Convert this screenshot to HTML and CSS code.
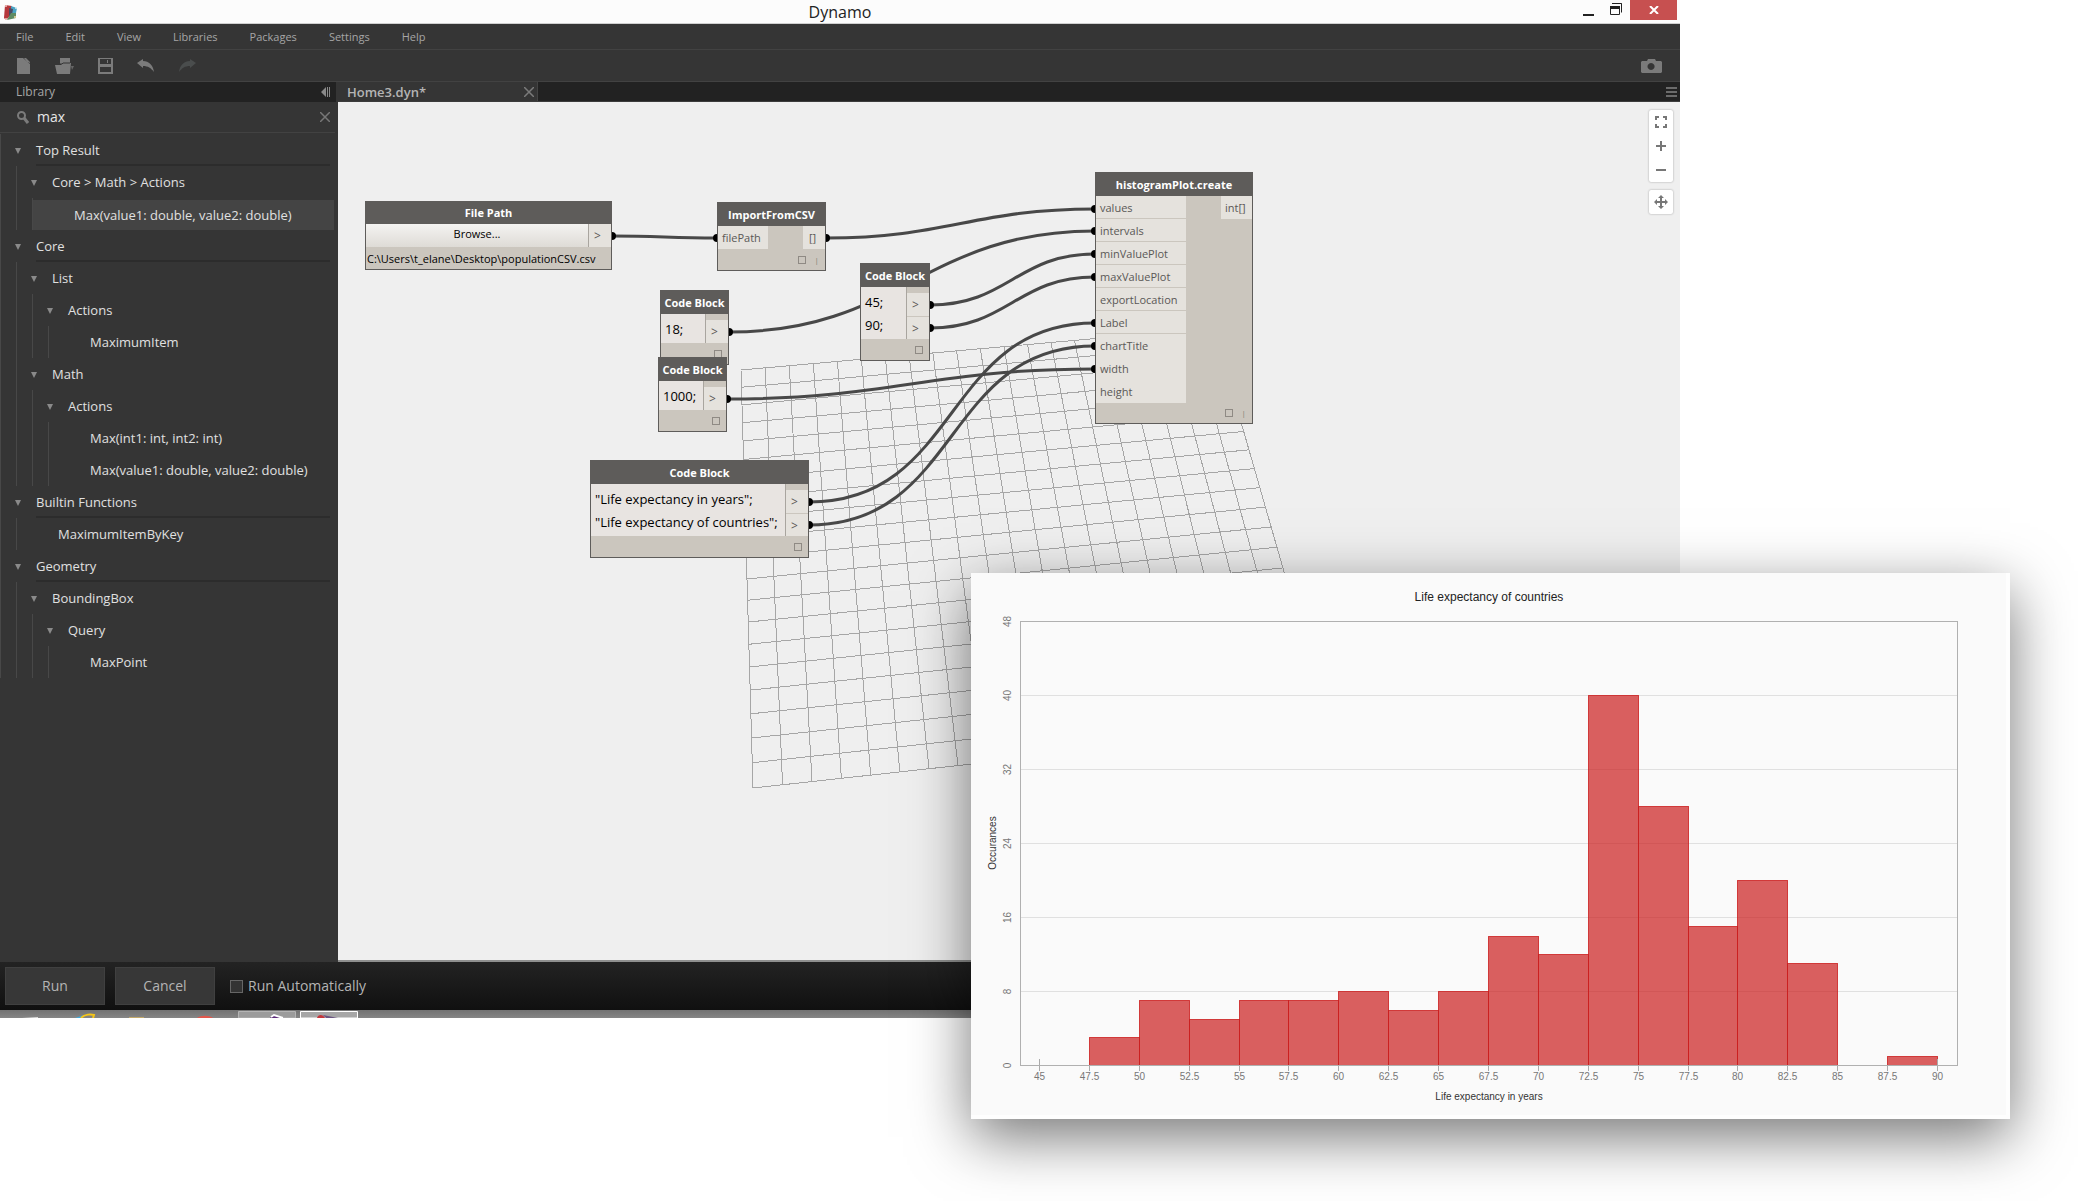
FILE: index.html
```html
<!DOCTYPE html>
<html lang="en">
<head>
<meta charset="utf-8">
<title>Dynamo</title>
<link rel="stylesheet" href="styles.css">
</head>
<body>
<div class="window">
  <header class="titlebar">
    <svg class="app-icon" width="14" height="17" viewBox="0 0 14 17" aria-hidden="true">
      <path d="M1 1 8 2 7 11 2 16 0 14z" fill="#b5373c"/>
      <path d="M7 2 13 4 12 9 7 9z" fill="#4aa3c4"/>
      <path d="M5 4 9 5 8 11 5 12z" fill="#4b4a63"/>
      <path d="M7 9 12 9 12 14 3 16z" fill="#5e8a62"/>
      <circle cx="2" cy="2" r="1" fill="#f3c6c0"/><circle cx="12" cy="4" r="1" fill="#d9eef5"/><circle cx="11" cy="13" r="1" fill="#f0d9a0"/><circle cx="2" cy="15" r="1" fill="#f3c6c0"/>
    </svg>
    <h1 class="title">Dynamo</h1>
    <div class="window-controls">
      <button class="wc" aria-label="Minimize"><svg width="12" height="14" viewBox="0 0 12 14"><path d="M0 11h11v2H0z" fill="#222"/></svg></button>
      <button class="wc" aria-label="Restore"><svg width="12" height="14" viewBox="0 0 12 14"><path d="M2.500 .5h9V9.500M2 .5h9.500" fill="none" stroke="#222"/><path d="M.5 3.500h9v8h-9z" fill="none" stroke="#222"/><path d="M0 3h10v3H0z" fill="#222"/></svg></button>
      <button class="wc close" aria-label="Close"><svg width="10" height="8" viewBox="0 0 10 8"><path d="M1 0 9 8M9 0 1 8" stroke="#fff" stroke-width="2"/></svg></button>
    </div>
  </header>

  <nav class="menubar">
    <a href="#">File</a><a href="#">Edit</a><a href="#">View</a><a href="#">Libraries</a><a href="#">Packages</a><a href="#">Settings</a><a href="#">Help</a>
  </nav>

  <div class="toolbar">
    <button class="tool" aria-label="New"><svg width="14" height="16" viewBox="0 0 14 16"><path d="M0 0h6l7 6v10H0z" fill="#7b7b7b"/><path d="M7 0h2l4 4v1l-3-1z" fill="#7b7b7b"/></svg></button>
    <button class="tool" aria-label="Open"><svg width="19" height="16" viewBox="0 0 19 16"><path d="M5 0h10v6H5zM0 7h6l1-2h9l-1 11H2z" fill="#7b7b7b"/><path d="M5 6h2l1-1h7" fill="none" stroke="#353535"/><path d="M16 8h3l-2 4z" fill="#666"/></svg></button>
    <button class="tool" aria-label="Save"><svg width="15" height="16" viewBox="0 0 15 16"><path fill-rule="evenodd" d="M0 0h15v16H0zM2 1v5h11V1zM2 9v5h11V9z" fill="#7b7b7b"/><path d="M9 2h1v3H9z" fill="#7b7b7b"/></svg></button>
    <button class="tool" aria-label="Undo"><svg width="18" height="14" viewBox="0 0 18 14"><path d="M0 4 6 0v2c6 0 10 4 11 11C14 9 11 7 6 7v2z" fill="#7b7b7b"/></svg></button>
    <button class="tool" aria-label="Redo" disabled><svg width="18" height="14" viewBox="0 0 18 14"><path d="M17 4 11 0v2C5 2 1 6 0 13 3 9 6 7 11 7v2z" fill="#4a4d4d"/></svg></button>
    <button class="tool camera" aria-label="Export image"><svg width="21" height="14" viewBox="0 0 21 14"><path fill-rule="evenodd" d="M1 2h5l1-2h7l1 2h5l1 1v10l-1 1H1l-1-1V3zM10 4a3.500 3.500 0 1 0 .1 0z" fill="#7b7b7b"/></svg></button>
  </div>

  <div class="workarea">
    <aside class="sidebar">
      <div class="library-head"><h2>Library</h2>
        <button class="plain" aria-label="Collapse library"><svg width="9" height="10" viewBox="0 0 9 10"><path d="M0 5 5 0v10zM6 0h1v10H6zM8 0h1v10H8z" fill="#8a8a8a"/></svg></button></div>
      <div class="search">
        <svg width="12" height="13" viewBox="0 0 12 13" aria-hidden="true"><circle cx="4.500" cy="4.500" r="3.500" fill="none" stroke="#7b7b7b" stroke-width="2"/><path d="M7 7l4 5" stroke="#7b7b7b" stroke-width="3"/></svg>
        <input type="text" value="max" aria-label="Search library">
        <button class="plain" aria-label="Clear search"><svg width="10" height="10" viewBox="0 0 10 10"><path d="M0 0 10 10M10 0 0 10" stroke="#777" stroke-width="1.500"/></svg></button>
      </div>
      <ul class="tree">
        <li><div class="row cat">Top Result</div>
          <ul><li><div class="row grp">Core &gt; Math &gt; Actions</div>
            <ul><li><div class="row leaf selected">Max(value1: double, value2: double)</div></li></ul></li></ul></li>
        <li><div class="row cat">Core</div>
          <ul>
            <li><div class="row grp">List</div>
              <ul><li><div class="row grp">Actions</div>
                <ul><li><div class="row leaf">MaximumItem</div></li></ul></li></ul></li>
            <li><div class="row grp">Math</div>
              <ul><li><div class="row grp">Actions</div>
                <ul><li><div class="row leaf">Max(int1: int, int2: int)</div></li>
                <li><div class="row leaf">Max(value1: double, value2: double)</div></li></ul></li></ul></li>
          </ul></li>
        <li><div class="row cat">Builtin Functions</div>
          <ul><li><div class="row leaf">MaximumItemByKey</div></li></ul></li>
        <li><div class="row cat">Geometry</div>
          <ul><li><div class="row grp">BoundingBox</div>
            <ul><li><div class="row grp">Query</div>
              <ul><li><div class="row leaf">MaxPoint</div></li></ul></li></ul></li></ul></li>
      </ul>
    </aside>

    <main class="workspace">
      <div class="tabs">
        <div class="tab"><span>Home3.dyn*</span>
          <button class="plain" aria-label="Close tab"><svg width="10" height="10" viewBox="0 0 10 10"><path d="M0 0 10 10M10 0 0 10" stroke="#7b7b7b" stroke-width="1.500"/></svg></button></div>
        <button class="plain tab-list" aria-label="Tab list"><svg width="11" height="10" viewBox="0 0 11 10"><path d="M0 0h11v2H0zM0 4h11v2H0zM0 8h11v2H0z" fill="#6b6b6b"/></svg></button>
      </div>

      <div class="canvas">
        <svg class="scene" aria-hidden="true">
          <g id="grid"></g>
          <g class="wires">
            <path d="M274 134C321 134 332 136 379 136"/>
            <path d="M488 136C610 136 635 107 757 107"/>
            <path d="M391 230C561 230 587 129 757 129"/>
            <path d="M592 203C670 203 679 152 757 152"/>
            <path d="M592 226C670 226 679 175 757 175"/>
            <path d="M389 297C555 297 591 267 757 267"/>
            <path d="M471 400C623 400 605 221 757 221"/>
            <path d="M471 423C623 423 605 244 757 244"/>
          </g>
          <g class="dots">
            <circle cx="274" cy="134" r="4"/><circle cx="379" cy="136" r="4"/>
            <circle cx="488" cy="136" r="4"/><circle cx="757" cy="107" r="4"/>
            <circle cx="391" cy="230" r="4"/><circle cx="757" cy="129" r="4"/>
            <circle cx="592" cy="203" r="4"/><circle cx="757" cy="152" r="4"/>
            <circle cx="592" cy="226" r="4"/><circle cx="757" cy="175" r="4"/>
            <circle cx="389" cy="297" r="4"/><circle cx="757" cy="267" r="4"/>
            <circle cx="471" cy="400" r="4"/><circle cx="757" cy="221" r="4"/>
            <circle cx="471" cy="423" r="4"/><circle cx="757" cy="244" r="4"/>
          </g>
        </svg>

        <section class="node n-file"><h3>File Path</h3>
          <div class="node-body"><button class="browse">Browse...</button><div class="outs flush"><span class="port out">&gt;</span></div></div>
          <p class="path">C:\Users\t_elane\Desktop\populationCSV.csv</p></section>

        <section class="node n-import"><h3>ImportFromCSV</h3>
          <div class="node-body"><div class="ins"><span class="port">filePath</span></div><div class="outs flush type"><span class="port">[]</span></div></div>
          <footer><i class="box"></i><span>|</span></footer></section>

        <section class="node n-18"><h3>Code Block</h3>
          <div class="node-body"><pre class="code">18;</pre><div class="outs"><span class="port out">&gt;</span></div></div>
          <footer><i class="box"></i></footer></section>

        <section class="node n-1000"><h3>Code Block</h3>
          <div class="node-body"><pre class="code">1000;</pre><div class="outs"><span class="port out">&gt;</span></div></div>
          <footer><i class="box"></i></footer></section>

        <section class="node n-range"><h3>Code Block</h3>
          <div class="node-body"><pre class="code">45;
90;</pre><div class="outs"><span class="port out">&gt;</span><span class="port out">&gt;</span></div></div>
          <footer><i class="box"></i></footer></section>

        <section class="node n-text"><h3>Code Block</h3>
          <div class="node-body"><pre class="code">"Life expectancy in years";
"Life expectancy of countries";</pre><div class="outs"><span class="port out">&gt;</span><span class="port out">&gt;</span></div></div>
          <footer><i class="box"></i></footer></section>

        <section class="node n-plot"><h3>histogramPlot.create</h3>
          <div class="node-body"><div class="ins">
            <span class="port ruled">values</span><span class="port ruled">intervals</span><span class="port ruled">minValuePlot</span><span class="port ruled">maxValuePlot</span><span class="port ruled">exportLocation</span><span class="port ruled">Label</span><span class="port">chartTitle</span><span class="port">width</span><span class="port">height</span></div>
            <div class="outs flush type"><span class="port">int[]</span></div></div>
          <footer><i class="box"></i><span>|</span></footer></section>

        <div class="view-controls">
          <div class="pad">
            <button aria-label="Zoom to fit"><svg width="12" height="12" viewBox="0 0 12 12"><path d="M1 4V1h3M8 1h3v3M11 8v3H8M4 11H1V8" fill="none" stroke="#777" stroke-width="2"/></svg></button>
            <button aria-label="Zoom in"><svg width="10" height="10" viewBox="0 0 10 10"><path d="M5 0v10M0 5h10" stroke="#777" stroke-width="2"/></svg></button>
            <button aria-label="Zoom out"><svg width="10" height="10" viewBox="0 0 10 10"><path d="M0 5h10" stroke="#777" stroke-width="2"/></svg></button>
          </div>
          <div class="pad">
            <button aria-label="Pan"><svg width="14" height="14" viewBox="0 0 14 14"><path d="M7 1v12M1 7h12" stroke="#777" stroke-width="2"/><path d="M7 0l3 3H4zM7 14l3-3H4zM0 7l3-3v6zM14 7l-3-3v6z" fill="#777"/></svg></button>
          </div>
        </div>
      </div>
    </main>
  </div>

  <div class="runbar">
    <button class="run">Run</button>
    <button class="run">Cancel</button>
    <label><input type="checkbox">Run Automatically</label>
  </div>

  <div class="taskbar">
    <svg width="380" height="8" viewBox="0 0 380 8" aria-hidden="true">
      <path d="M22 8 38 7v1z" fill="#ddd"/>
      <path d="M75 8 84 5 80 8z" fill="#3fa9dc"/><path d="M81 8C85 4 91 4 94 5l-1 3" fill="none" stroke="#f5c518" stroke-width="2"/>
      <path d="M129 7h15v1h-15z" fill="#c2a869"/>
      <path d="M197 8c4-3 12-3 16 0z" fill="#e2574c"/>
      <path d="M238.500 1.500h57V8h-57z" fill="#9b9b9b" stroke="#b4b4b4"/>
      <path d="M300.500 1.500h57V8h-57z" fill="#a6a6a6" stroke="#fff"/>
      <path d="M270 8 273 5 284 8z" fill="#5a2a78"/><path d="M271 7 274 5 283 8" fill="none" stroke="#fff" stroke-width="2"/>
      <path d="M317 8c1-4 6-4 8 0z" fill="#c4373c"/><path d="M323 5 338 8h-12z" fill="#6b5580"/>
    </svg>
  </div>
</div>

<figure class="chart-card">
  <div class="chart-inner">
    <svg id="chart" viewBox="0 0 1039 546" role="img" aria-label="Life expectancy of countries">
      <text class="c-title" x="518" y="28">Life expectancy of countries</text>
      <g id="plot"></g>
      <text class="c-axis" x="518" y="527">Life expectancy in years</text>
      <text class="c-axis" transform="translate(25 270) rotate(-90)">Occurances</text>
    </svg>
  </div>
</figure>
<script src="app.js"></script>
</body>
</html>
```
FILE: styles.css
```css
* { box-sizing: border-box; }
body {
  margin: 0;
  min-height: 100vh;
  position: relative;
  overflow: hidden;
  background: #fff;
  font: 13px/16px "Open Sans", sans-serif;
}
h1, h2, h3, p, ul, pre, figure { margin: 0; padding: 0; }
button { font: inherit; border: 0; padding: 0; background: none; color: inherit; display: flex; align-items: center; justify-content: center; }
svg { display: block; }

.window {
  width: calc(100% - 398px);
  height: calc(100vh - 183px);
  display: flex;
  flex-direction: column;
  background: #353535;
  color: #e0e0e0;
}

.titlebar {
  display: grid;
  grid-template-columns: 1fr auto 1fr;
  height: 24px;
  background: #fcfcfc;
  border-bottom: 1px solid #d0d0d0;
  color: #222;
}
.app-icon { margin: 4px 0 0 4px; }
.title { font-size: 16px; font-weight: 400; line-height: 24px; }
.window-controls { display: flex; justify-content: flex-end; align-items: flex-start; padding-right: 3px; }
.wc { width: 27px; height: 20px; padding-bottom: 1px; }
.wc.close { width: 47px; padding: 0; margin-left: 1px; background: #c75050; }

.menubar { display: flex; gap: 32px; height: 26px; padding: 0 16px; border-bottom: 1px solid #424242; }
.menubar a { color: #a6a6a6; text-decoration: none; font-size: 11px; line-height: 26px; }

.toolbar { display: flex; align-items: center; gap: 24px; height: 32px; padding: 0 18px 0 17px; border-bottom: 1px solid #424242; }
.camera { margin-left: auto; }

.workarea { flex: 1; display: flex; min-height: 0; }
.sidebar { width: 338px; flex: none; }
.library-head {
  display: flex; justify-content: space-between; align-items: center;
  height: 20px; margin-right: 2px; padding: 0 6px 0 16px; background: #222;
}
.library-head h2 { font-size: 12px; font-weight: 400; color: #a6a6a6; line-height: 20px; }
.search { display: flex; align-items: center; gap: 8px; height: 31px; margin-right: 3px; padding: 0 5px 0 17px; border-bottom: 1px solid #424242; }
.search input { flex: 1; min-width: 0; border: 0; padding: 0; background: none; color: #e6e6e6; font: 14px/20px "Open Sans", sans-serif; outline: 0; }

.tree, .tree ul { list-style: none; border-left: 1px solid #484848; }
.tree { margin: 1px 4px 0 0; }
.tree ul { margin-left: 15px; }
.row { position: relative; height: 32px; line-height: 33px; padding-left: 35px; white-space: nowrap; }
.row::before {
  content: ""; position: absolute; left: 14px; top: 14px;
  border: 3px solid transparent; border-top: 6px solid #8a8a8a; border-bottom: 0;
}
.cat { line-height: 32px; }
.cat::after { content: ""; position: absolute; left: 35px; right: 4px; bottom: 0; height: 2px; background: #2c2c2c; }
.leaf { padding-left: 41px; }
.leaf::before { display: none; }
.selected { line-height: 34px; background: linear-gradient(#353535 2px, #444 2px); }

.workspace { flex: 1; display: flex; flex-direction: column; min-width: 0; }
.tabs { display: flex; justify-content: space-between; height: 20px; padding-right: 3px; background: #222; border-bottom: 1px solid #3c3c3c; }
.tab { display: flex; justify-content: space-between; align-items: center; width: 200px; padding: 0 3px 0 9px; background: #353535; border-right: 1px solid #444; color: #b4b4b4; font-weight: 600; }

.canvas { position: relative; flex: 1; overflow: hidden; background: #efefef; border-bottom: 2px solid #8f908f; color: #000; }
.scene { position: absolute; inset: 0; width: 100%; height: 100%; }
#grid { stroke: #a6a6a6; stroke-width: 1px; shape-rendering: crispEdges; }
.wires { fill: none; stroke: #484848; stroke-width: 3px; }
.dots { fill: #000; }

.node { position: absolute; display: flex; flex-direction: column; background: #cbc6be; border: 1px solid #5e5c5a; }
.node h3 { background: #5e5c5a; color: #fff; font-size: 11px; line-height: 23px; text-align: center; white-space: nowrap; }
.node-body { display: flex; justify-content: space-between; }
.node footer { display: flex; flex: 1; align-items: center; justify-content: flex-end; gap: 9px; padding-right: 6px; font-size: 8px; color: #857f78; }
.box { width: 8px; height: 8px; border: 1px solid #8f8a84; }
.ins, .outs { display: flex; flex-direction: column; }
.port { height: 23px; padding: 0 5px 0 4px; background: #e5e2dd; color: #5a5856; font-size: 11px; line-height: 24px; }
.ruled { border-bottom: 1px solid #cbc6be; }
.outs { padding-top: 6px; border-left: 1px solid #a9a59f; }
.outs.flush { padding-top: 0; }
.outs.type { border: 0; }
.out { width: 22px; padding-left: 5px; font-size: 12px; }
.out + .out { border-top: 1px solid #cbc6be; }
.code { flex: 1; padding: 4px 4px 2px; background: #e8e4e1; font: 13px/23px "Open Sans", sans-serif; }

.n-file { left: 27px; top: 99px; width: 247px; height: 69px; }
.n-file h3 { line-height: 22px; }
.n-import { left: 379px; top: 100px; width: 109px; height: 69px; }
.n-18 { left: 322px; top: 188px; width: 69px; height: 75px; }
.n-1000 { left: 320px; top: 255px; width: 69px; height: 75px; }
.n-range { left: 522px; top: 161px; width: 70px; height: 98px; }
.n-text { left: 252px; top: 358px; width: 219px; height: 98px; }
.n-plot { left: 757px; top: 70px; width: 158px; height: 252px; }
.n-import .ins { width: 50px; }
.n-plot .ins { width: 90px; }
.n-import .outs .port { width: 22px; padding-left: 6px; }
.n-plot .outs .port { width: 31px; }
.browse { flex: 1; height: 23px; padding-bottom: 3px; background: linear-gradient(#f4f3f1, #dedbd6); font-size: 11px; }
.path { padding-left: 1px; font-size: 11px; line-height: 24px; white-space: nowrap; }

.view-controls { position: absolute; right: 7px; top: 8px; display: grid; gap: 8px; }
.pad { display: grid; width: 24px; background: #fff; border-radius: 2px; box-shadow: 0 0 2px #999; }
.pad button { height: 24px; }

.runbar { display: flex; align-items: center; gap: 10px; height: 48px; padding: 0 5px; background: linear-gradient(#232323, #101010); color: #b4b4b4; font-size: 14px; }
.run { width: 100px; height: 38px; background: #373737; border: 1px solid #404040; }
.runbar label { display: flex; align-items: center; gap: 5px; margin-left: 5px; }
.runbar input { appearance: none; width: 13px; height: 13px; margin: 0; background: #333; border: 1px solid #666; }
.taskbar { height: 8px; overflow: hidden; background: linear-gradient(#727272, #858585); }

.chart-card {
  position: absolute; right: 68px; bottom: 82px; width: 50%;
  background: #fefefe;
  box-shadow: 0 18px 56px rgba(0, 0, 0, .54);
}
.chart-inner { background: linear-gradient(#fafafa, #fafafa) 0 0 / calc(100% - 4px) calc(100% - 4px) no-repeat; }
#chart { width: 100%; height: auto; font-family: "Liberation Sans", Arial, sans-serif; }
#chart text { text-anchor: middle; }
.c-title { font-size: 12px; fill: #222; }
.c-axis { font-size: 10px; fill: #333; }
#chart .c-tick { font-size: 10px; fill: #777; }
.c-line { stroke: #e0e0e0; }
.c-mark { stroke: #aaa; }
.c-frame { fill: none; stroke: #b0b0b0; }
.c-bar { fill: #cb1d1d; fill-opacity: .7; stroke: #cb1d1d; stroke-opacity: .8; }
```
FILE: app.js
```js
const NS = "http://www.w3.org/2000/svg";
function add(parent, tag, attrs, text) {
  const el = document.createElementNS(NS, tag);
  for (const k in attrs) el.setAttribute(k, attrs[k]);
  if (text !== undefined) el.textContent = text;
  parent.appendChild(el);
}

// Ground plane: a 20 x 20 unit grid seen in perspective.
const corners = { tl: [403, 268], tr: [876, 226], br: [990, 623], bl: [415, 686] };
function projector({ tl, tr, br, bl }) {
  const dx1 = tr[0] - br[0], dy1 = tr[1] - br[1];
  const dx2 = bl[0] - br[0], dy2 = bl[1] - br[1];
  const sx = tl[0] - tr[0] + br[0] - bl[0], sy = tl[1] - tr[1] + br[1] - bl[1];
  const det = dx1 * dy2 - dx2 * dy1;
  const g = (sx * dy2 - dx2 * sy) / det, h = (dx1 * sy - sx * dy1) / det;
  return (u, v) => [0, 1].map(i =>
    (tl[i] + u * (tr[i] * (1 + g) - tl[i]) + v * (bl[i] * (1 + h) - tl[i])) / (1 + g * u + h * v));
}
const at = projector(corners), grid = document.getElementById("grid");
for (let i = 0; i <= 20; i++) {
  const t = i / 20;
  for (const [a, b] of [[at(t, 0), at(t, 1)], [at(0, t), at(1, t)]])
    add(grid, "line", { x1: a[0], y1: a[1], x2: b[0], y2: b[1] });
}

// Histogram: counts per 2.5-year interval, starting at 45.
const counts = [0, 3, 7, 5, 7, 7, 8, 6, 8, 14, 12, 40, 28, 15, 20, 11, 0, 1];
const plot = document.getElementById("plot");
const box = { left: 49, top: 48, right: 986, bottom: 492 };
const px = i => Math.round(68 + i * 898 / 18) + 0.5;
const py = n => Math.round(box.bottom - n * (box.bottom - box.top) / 48) + 0.5;
for (let n = 0; n <= 48; n += 8) {
  if (n && n < 48) add(plot, "line", { class: "c-line", x1: box.left, x2: box.right, y1: py(n), y2: py(n) });
  add(plot, "text", { class: "c-tick", transform: `translate(40 ${py(n)}) rotate(-90)` }, n);
}
counts.forEach((n, i) => {
  if (n) add(plot, "rect", { class: "c-bar", x: px(i), y: py(n), width: px(i + 1) - px(i), height: py(0) - py(n) });
});
for (let i = 0; i <= 18; i++) {
  const edge = i === 0 || i === 18;
  add(plot, "line", { class: "c-mark", x1: px(i), x2: px(i), y1: box.bottom - (edge ? 6 : 0), y2: box.bottom + 6 });
  add(plot, "text", { class: "c-tick", x: px(i), y: 507 }, 45 + i * 2.5);
}
add(plot, "rect", { class: "c-frame", x: box.left + 0.5, y: box.top + 0.5, width: box.right - box.left, height: box.bottom - box.top });
```
